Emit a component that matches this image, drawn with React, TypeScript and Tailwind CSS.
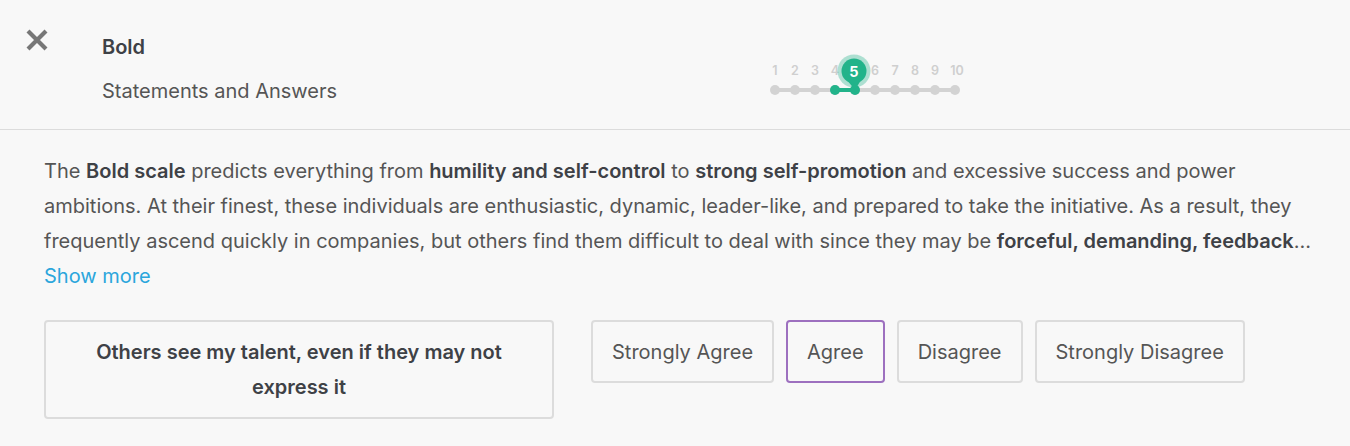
import React from 'react';

const answers = ['Strongly Agree', 'Agree', 'Disagree', 'Strongly Disagree'];

function Scale({ value }: { value: number }) {
  const xs = Array.from({ length: 10 }, (_, i) => 8 + i * 20);
  const cur = xs[value - 1];
  return (
    <svg width="200" height="60" viewBox="0 0 200 60" aria-hidden="true">
      {xs.map((x, i) =>
        i + 1 === value ? null : (
          <text key={i} x={i === 9 ? x + 2 : x} y="38" textAnchor="middle" fontSize="12.5" fontWeight="600" fill="#cfcfcf" fontFamily="Inter, sans-serif">
            {i + 1}
          </text>
        )
      )}
      <line x1={xs[0]} y1="53" x2={xs[9]} y2="53" stroke="#d3d3d3" strokeWidth="4" strokeLinecap="round" />
      {xs.map((x, i) => (
        <circle key={i} cx={x} cy="53" r="5" fill="#d3d3d3" />
      ))}
      <line x1={cur - 20} y1="53" x2={cur} y2="53" stroke="#22b38a" strokeWidth="4" />
      <circle cx={cur - 20} cy="53" r="5" fill="#22b38a" />
      <circle cx={cur} cy="53" r="5" fill="#22b38a" />
      <circle cx={cur - 1} cy="34" r="16.5" fill="#22b38a" opacity="0.35" />
      <path d={`M${cur - 8} 43 L${cur} 53 L${cur + 6} 43 Z`} fill="#22b38a" />
      <circle cx={cur - 1} cy="34" r="12.5" fill="#22b38a" />
      <text x={cur - 1} y="39.5" textAnchor="middle" fontSize="14.5" fontWeight="700" fill="#ffffff" fontFamily="Inter, sans-serif">
        {value}
      </text>
    </svg>
  );
}

export default function App() {
  return (
    <div className="min-h-[446px] w-[1350px] bg-[#f8f8f8] font-['Inter','Liberation_Sans',sans-serif] text-[20px] text-[#555]">
      {/* Header */}
      <div className="flex h-[130px] border-b border-[#dcdcdc] pl-[24px]">
        <button className="mt-[27px] h-[26px] w-[26px] shrink-0 text-[#777]" aria-label="Close">
          <svg viewBox="0 0 26 26" width="26" height="26">
            <path d="M4 4 L22 22 M22 4 L4 22" stroke="currentColor" strokeWidth="4.2" strokeLinecap="butt" />
          </svg>
        </button>
        <div className="ml-[52px] w-[665px] shrink-0 pt-[34px]">
          <div className="font-semibold leading-[26px] text-[#3e4146]">Bold</div>
          <div className="mt-[18px] leading-[26px] text-[#555]">Statements and Answers</div>
        </div>
        <div className="pt-[37px]">
          <Scale value={5} />
        </div>
      </div>

      {/* Body */}
      <div className="pl-[44px] pr-[28px]">
        <p className="pt-[24px] leading-[35px]">
          The <b className="font-semibold text-[#3e4146]">Bold scale</b> predicts everything from{' '}
          <b className="font-semibold text-[#3e4146]">humility and self-control</b> to{' '}
          <b className="font-semibold text-[#3e4146]">strong self-promotion</b> and excessive success and power ambitions. At
          their finest, these individuals are enthusiastic, dynamic, leader-like, and prepared to take the initiative. As a
          result, they frequently ascend quickly in companies, but others find them difficult to deal with since they may be{' '}
          <b className="font-semibold text-[#3e4146]">forceful, demanding, feedback</b>...
        </p>
        <button className="leading-[35px] text-[#2ba6dc]">Show more</button>

        <div className="mt-[26px] flex items-start">
          <div className="flex h-[99px] w-[510px] items-center justify-center rounded-[4px] border-2 border-[#dcdcdc] px-[40px] text-center font-semibold leading-[35px] text-[#3e4146]">
            Others see my talent, even if they may not express it
          </div>
          <div className="ml-[37px] flex gap-[12px]">
            {answers.map((a) => (
              <button
                key={a}
                className={`h-[63px] rounded-[4px] border-2 px-[19px] text-[#555] ${
                  a === 'Agree' ? 'border-[#9d70bf]' : 'border-[#dcdcdc]'
                }`}
              >
                {a}
              </button>
            ))}
          </div>
        </div>
      </div>
    </div>
  );
}
